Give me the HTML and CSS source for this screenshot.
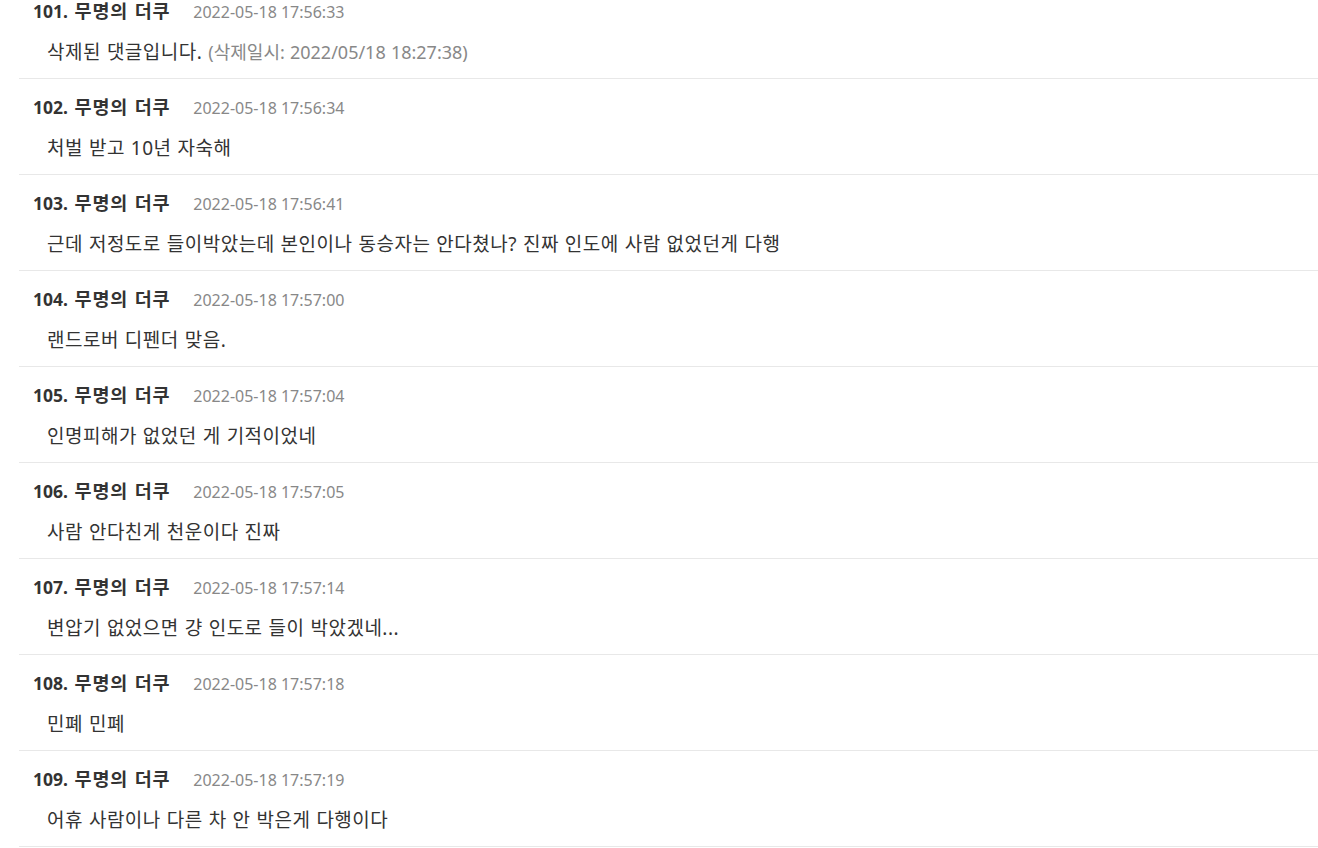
FILE: index.html
```html
<!DOCTYPE html>
<html>
<head>
  <title>댓글</title>
  <link rel="stylesheet" href="styles.css">
</head>
<body>

  <ul class="comments">
    <li class="comment">
      <div class="comment-head"><span class="author"><span class="num">101.</span> 무명의 더쿠</span><span class="date">2022-05-18 17:56:33</span></div>
      <p class="comment-body">삭제된 댓글입니다. <span class="deleted">(삭제일시: 2022/05/18 18:27:38)</span></p>
    </li>
    <li class="comment">
      <div class="comment-head"><span class="author"><span class="num">102.</span> 무명의 더쿠</span><span class="date">2022-05-18 17:56:34</span></div>
      <p class="comment-body">처벌 받고 10년 자숙해</p>
    </li>
    <li class="comment">
      <div class="comment-head"><span class="author"><span class="num">103.</span> 무명의 더쿠</span><span class="date">2022-05-18 17:56:41</span></div>
      <p class="comment-body">근데 저정도로 들이박았는데 본인이나 동승자는 안다쳤나? 진짜 인도에 사람 없었던게 다행</p>
    </li>
    <li class="comment">
      <div class="comment-head"><span class="author"><span class="num">104.</span> 무명의 더쿠</span><span class="date">2022-05-18 17:57:00</span></div>
      <p class="comment-body">랜드로버 디펜더 맞음.</p>
    </li>
    <li class="comment">
      <div class="comment-head"><span class="author"><span class="num">105.</span> 무명의 더쿠</span><span class="date">2022-05-18 17:57:04</span></div>
      <p class="comment-body">인명피해가 없었던 게 기적이었네</p>
    </li>
    <li class="comment">
      <div class="comment-head"><span class="author"><span class="num">106.</span> 무명의 더쿠</span><span class="date">2022-05-18 17:57:05</span></div>
      <p class="comment-body">사람 안다친게 천운이다 진짜</p>
    </li>
    <li class="comment">
      <div class="comment-head"><span class="author"><span class="num">107.</span> 무명의 더쿠</span><span class="date">2022-05-18 17:57:14</span></div>
      <p class="comment-body">변압기 없었으면 걍 인도로 들이 박았겠네...</p>
    </li>
    <li class="comment">
      <div class="comment-head"><span class="author"><span class="num">108.</span> 무명의 더쿠</span><span class="date">2022-05-18 17:57:18</span></div>
      <p class="comment-body">민폐 민폐</p>
    </li>
    <li class="comment">
      <div class="comment-head"><span class="author"><span class="num">109.</span> 무명의 더쿠</span><span class="date">2022-05-18 17:57:19</span></div>
      <p class="comment-body">어휴 사람이나 다른 차 안 박은게 다행이다</p>
    </li>
  </ul>

</body>
</html>
```

FILE: styles.css
```css
body {
  margin: 0;
  background: #fff;
  font-family: "Noto Sans", "Noto Sans CJK KR", sans-serif;
  color: #333;
}

.comments {
  list-style: none;
  margin: -17px 0 0 19px;
  padding: 0;
}

.comment {
  padding: 16px 0 13px 14px;
  border-bottom: 1px solid #e8e8e8;
}

.comment-head {
  display: flex;
  align-items: baseline;
  gap: 23px;
  height: 24px;
  line-height: 24px;
}

.author {
  font-size: 18.5px;
  font-weight: bold;
  letter-spacing: 0.8px;
  word-spacing: 1px;
  color: #333;
}

.author .num {
  font-size: 17.5px;
  letter-spacing: 0;
}

.date {
  font-size: 16px;
  color: #888;
}

.comment-body {
  margin: 16px 0 0 14px;
  font-size: 19px;
  letter-spacing: 0.5px;
  word-spacing: 0.5px;
  line-height: 26px;
}

.deleted {
  font-size: 18px;
  letter-spacing: 0;
  color: #888;
}
```
